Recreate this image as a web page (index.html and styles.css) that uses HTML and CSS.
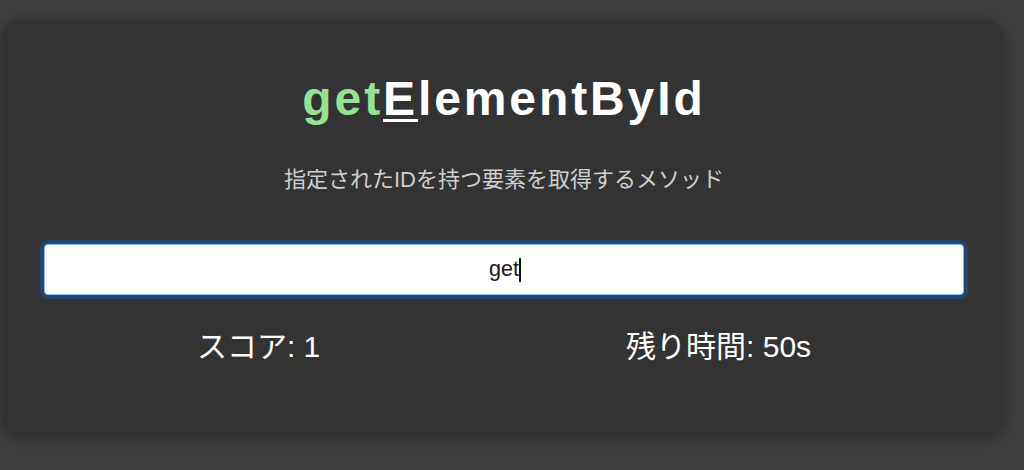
FILE: index.html
```html
<!DOCTYPE html>
<html lang="ja">
<head>
<meta charset="utf-8">
<title>getElementById タイピング</title>
<link rel="stylesheet" href="styles.css">
</head>
<body>
<main class="card">
  <h1 class="word"><span class="typed">get</span><span class="next">E</span><span class="rest">lementById</span></h1>
  <p class="desc">指定されたIDを持つ要素を取得するメソッド</p>
  <div class="field">
    <input class="answer" type="text" value="get">
    <span class="caret"></span>
  </div>
  <div class="stats">
    <div class="stat">スコア: 1</div>
    <div class="stat">残り時間: 50s</div>
  </div>
</main>
</body>
</html>
```
FILE: styles.css
```css
html, body {
  margin: 0;
  padding: 0;
}
body {
  background: #3f3f3f;
  font-family: "Liberation Sans", "Noto Sans CJK JP", sans-serif;
  color: #fff;
  height: 470px;
  overflow: hidden;
}
.card {
  box-sizing: border-box;
  width: 1000px;
  height: 413px;
  margin: 20px 0 0 3px;
  padding: 51px 39px 0 41px;
  background: #333333;
  border-radius: 16px;
  box-shadow: 0 4px 18px rgba(0, 0, 0, 0.35);
  display: flex;
  flex-direction: column;
}
.word {
  margin: 0;
  text-align: center;
  font-size: 48px;
  line-height: 55px;
  font-weight: 700;
  letter-spacing: 2.9px;
  color: #ffffff;
}
.typed {
  color: #95e297;
}
.next {
  text-decoration: underline;
  text-decoration-thickness: 3px;
  text-underline-offset: 4px;
}
.desc {
  margin: 39px 0 0;
  text-align: center;
  font-size: 22px;
  line-height: 30px;
  color: #cfcfcf;
}
.field {
  position: relative;
  margin-top: 49px;
  display: flex;
}
.answer {
  flex: 1;
  box-sizing: border-box;
  height: 51px;
  margin: 0;
  padding: 0 12px;
  border: 1px solid #80bdff;
  border-radius: 4px;
  background: #ffffff;
  box-shadow: 0 0 0 4px rgba(0, 123, 255, 0.25);
  outline: none;
  font-family: "Liberation Sans", "Noto Sans CJK JP", sans-serif;
  font-size: 21.5px;
  color: #1a1a1a;
  text-align: center;
}
.caret {
  position: absolute;
  left: calc(50% + 15px);
  top: 14px;
  width: 2px;
  height: 24px;
  background: #111;
}
.stats {
  margin-top: 34px;
  display: flex;
  justify-content: space-around;
}
.stat {
  font-size: 30px;
  line-height: 36px;
  color: #ffffff;
}
```
